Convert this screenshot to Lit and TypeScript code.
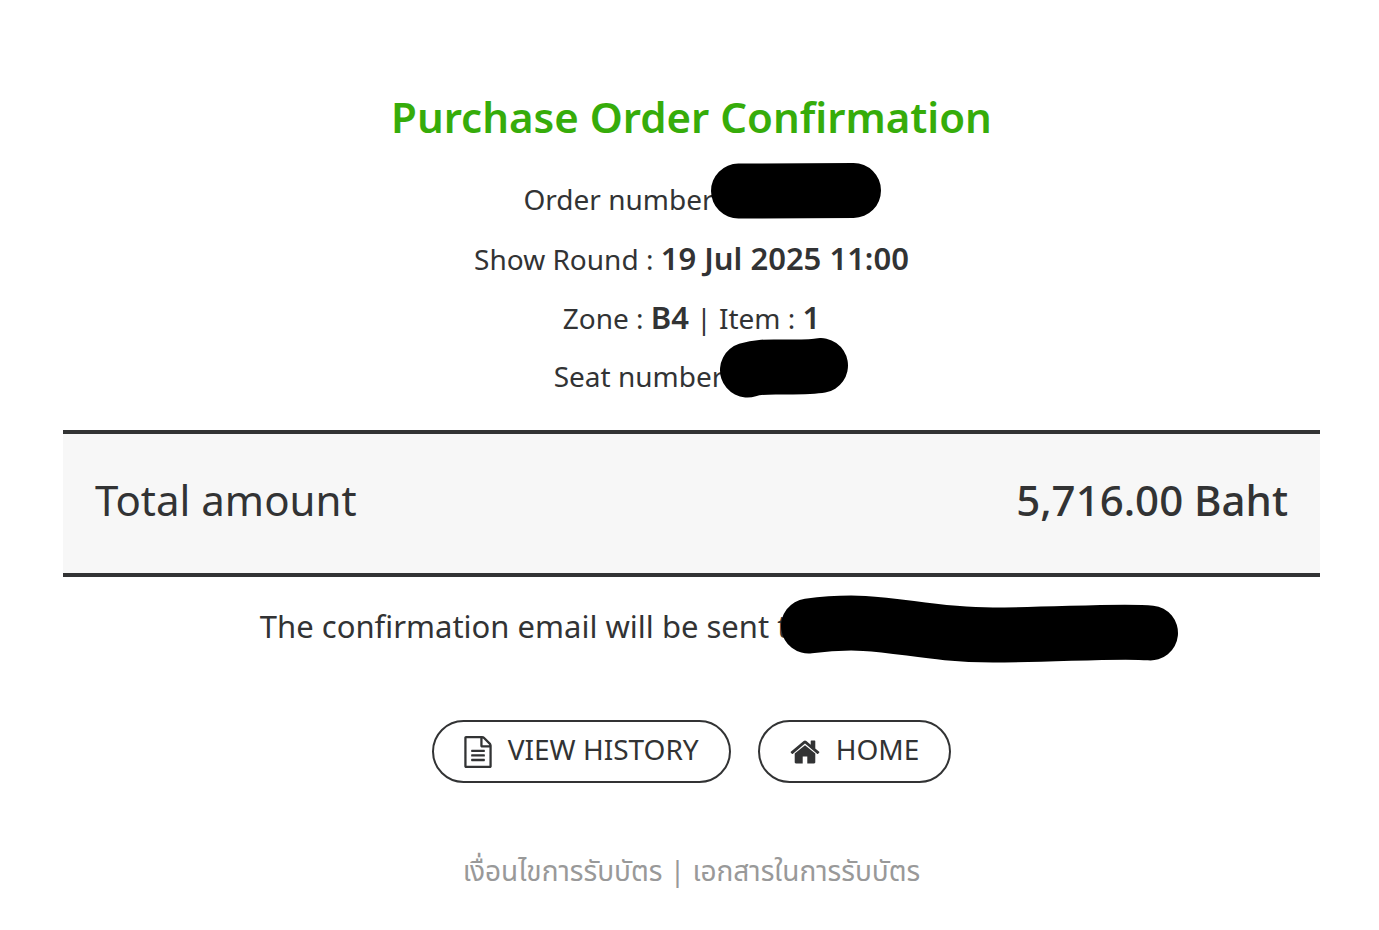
import { LitElement, html, css, svg } from "lit";
import { customElement } from "lit/decorators.js";

const fileIcon = svg`<path d="M1468 380q28 28 48 76t20 88v1152q0 40-28 68t-68 28h-1344q-40 0-68-28t-28-68v-1600q0-40 28-68t68-28h896q40 0 88 20t76 48zM1024 136v376h376q-10-29-22-41l-313-313q-12-12-41-22zM1408 1664v-1024h-416q-40 0-68-28t-28-68v-416h-768v1536h1280zM384 800q0-14 9-23t23-9h704q14 0 23 9t9 23v64q0 14-9 23t-23 9h-704q-14 0-23-9t-9-23v-64zM1120 1024q14 0 23 9t9 23v64q0 14-9 23t-23 9h-704q-14 0-23-9t-9-23v-64q0-14 9-23t23-9h704zM1120 1280q14 0 23 9t9 23v64q0 14-9 23t-23 9h-704q-14 0-23-9t-9-23v-64q0-14 9-23t23-9h704z"/>`;
const homeIcon = svg`<path d="M1408 992v480q0 26-19 45t-45 19h-384v-384h-256v384h-384q-26 0-45-19t-19-45v-480q0-1 .5-3t.5-3l575-474 575 474q1 2 1 6zM1631 923l-62 74q-8 9-21 11h-3q-13 0-21-7l-692-577-692 577q-12 8-24 7-13-2-21-11l-62-74q-8-10-7-23.5t11-21.5l719-599q32-26 76-26t76 26l244 204v-195q0-14 9-23t23-9h192q14 0 23 9t9 23v408l219 182q10 8 11 21.5t-7 23.5z"/>`;

@customElement("app-root")
export class AppRoot extends LitElement {
  static styles = css`
    :host {
      display: block;
      color: #323334;
      background: #fff;
      font-family: "Noto Sans", "Noto Sans Thai", "Open Sans", sans-serif;
      font-size: 28px;
    }
    main {
      padding: 87px 59px 30px 63px;
      text-align: center;
    }
    h1 {
      margin: 0 0 32px;
      font-size: 42px;
      line-height: 60px;
      font-weight: 600;
      color: #36ac0a;
    }
    p {
      margin: 0;
    }
    .details {
      display: grid;
      gap: 19px;
      line-height: 40px;
      margin-bottom: 34px;
    }
    .details p {
      height: 40px;
    }
    strong {
      font-size: 31px;
      font-weight: 600;
    }
    .total {
      display: flex;
      justify-content: space-between;
      align-items: center;
      padding: 36px 32px 43px;
      line-height: 60px;
      font-size: 42px;
      background: #f7f7f7;
      border-top: 4px solid #323334;
      border-bottom: 4px solid #323334;
    }
    .total b {
      font-weight: 500;
    }
    .email {
      font-size: 31px;
      line-height: 42px;
      margin: 28px 0 73px;
    }
    /* Marker strokes that cover private values */
    .redacted {
      position: relative;
      display: inline-block;
      height: 40px;
      vertical-align: top;
    }
    .redacted svg {
      position: absolute;
      fill: none;
      stroke: #000;
      stroke-width: 55;
      stroke-linecap: round;
      stroke-linejoin: round;
    }
    .order-value {
      width: 146px;
    }
    .order-value svg {
      left: -3px;
      top: -16px;
    }
    .seat-value {
      width: 106px;
    }
    .seat-value svg {
      left: -3px;
      top: -18px;
    }
    .email-value {
      width: 316px;
    }
    .email-value svg {
      left: -26px;
      top: -10px;
    }
    nav {
      display: flex;
      flex-wrap: wrap;
      justify-content: center;
      gap: 27px;
    }
    button {
      display: flex;
      align-items: center;
      gap: 16px;
      height: 63px;
      padding: 0 30px;
      font: inherit;
      color: inherit;
      background: #fff;
      border: 2px solid #323334;
      border-radius: 32px;
      cursor: pointer;
    }
    button svg {
      fill: currentColor;
    }
    .label {
      padding-bottom: 6px;
    }
    footer {
      margin-top: 67px;
      line-height: 40px;
      color: #999;
    }
    footer a {
      color: inherit;
      text-decoration: none;
    }
  `;

  render() {
    return html`
      <main>
        <h1>Purchase Order Confirmation</h1>
        <section class="details">
          <p>Order number<span class="redacted order-value"><svg width="170" height="56" viewBox="0 0 170 56" aria-hidden="true"><path d="M27.5 28L142.5 27.5" /></svg></span></p>
          <p>Show Round : <strong>19 Jul 2025 11:00</strong></p>
          <p>Zone : <strong>B4</strong> | Item : <strong>1</strong></p>
          <p>Seat number<span class="redacted seat-value"><svg width="129" height="60" viewBox="0 0 129 60" aria-hidden="true"><path d="M27.5 32C40 28 52 29 66 29C82 29 92 29 100.5 27.5" /></svg></span></p>
        </section>
        <section class="total"><span>Total amount</span><b>5,716.00 Baht</b></section>
        <p class="email">The confirmation email will be sent to<span class="redacted email-value"><svg width="398" height="68" viewBox="0 0 398 68" aria-hidden="true"><path d="M27.5 31C104 21 130 40 212 40C275 40 340 35 369.5 38" /></svg></span></p>
        <nav>
          <button type="button"><svg width="28" height="32" viewBox="0 0 1536 1792" aria-hidden="true">${fileIcon}</svg><span class="label">VIEW HISTORY</span></button>
          <button type="button"><svg width="30" height="32" viewBox="0 0 1664 1792" aria-hidden="true">${homeIcon}</svg><span class="label">HOME</span></button>
        </nav>
        <footer><a href="#terms">เงื่อนไขการรับบัตร</a> | <a href="#documents">เอกสารในการรับบัตร</a></footer>
      </main>
    `;
  }
}
